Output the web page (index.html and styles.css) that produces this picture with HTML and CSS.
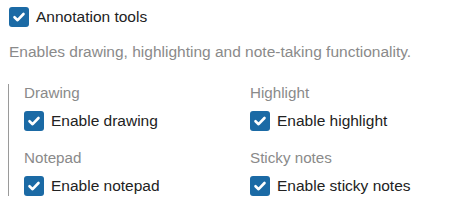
FILE: index.html
```html
<!DOCTYPE html>
<html>
<head>
<meta charset="utf-8">
<link rel="stylesheet" href="styles.css">
</head>
<body>
<div class="panel">
  <label class="check main">
    <span class="box"><svg viewBox="0 0 20 20" width="20" height="20"><polyline points="5.5,10.2 8.6,13.2 14.5,7" fill="none" stroke="#fff" stroke-width="2.6" stroke-linecap="round" stroke-linejoin="round"/></svg></span>
    <span class="text">Annotation tools</span>
  </label>
  <p class="desc">Enables drawing, highlighting and note-taking functionality.</p>
  <div class="group">
    <div class="cell">
      <div class="label">Drawing</div>
      <label class="check">
        <span class="box"><svg viewBox="0 0 20 20" width="20" height="20"><polyline points="5.5,10.2 8.6,13.2 14.5,7" fill="none" stroke="#fff" stroke-width="2.6" stroke-linecap="round" stroke-linejoin="round"/></svg></span>
        <span class="text">Enable drawing</span>
      </label>
    </div>
    <div class="cell">
      <div class="label">Highlight</div>
      <label class="check">
        <span class="box"><svg viewBox="0 0 20 20" width="20" height="20"><polyline points="5.5,10.2 8.6,13.2 14.5,7" fill="none" stroke="#fff" stroke-width="2.6" stroke-linecap="round" stroke-linejoin="round"/></svg></span>
        <span class="text">Enable highlight</span>
      </label>
    </div>
    <div class="cell">
      <div class="label">Notepad</div>
      <label class="check">
        <span class="box"><svg viewBox="0 0 20 20" width="20" height="20"><polyline points="5.5,10.2 8.6,13.2 14.5,7" fill="none" stroke="#fff" stroke-width="2.6" stroke-linecap="round" stroke-linejoin="round"/></svg></span>
        <span class="text">Enable notepad</span>
      </label>
    </div>
    <div class="cell">
      <div class="label">Sticky notes</div>
      <label class="check">
        <span class="box"><svg viewBox="0 0 20 20" width="20" height="20"><polyline points="5.5,10.2 8.6,13.2 14.5,7" fill="none" stroke="#fff" stroke-width="2.6" stroke-linecap="round" stroke-linejoin="round"/></svg></span>
        <span class="text">Enable sticky notes</span>
      </label>
    </div>
  </div>
</div>
</body>
</html>
```
FILE: styles.css
```css
html, body {
  margin: 0;
  padding: 0;
  background: #fff;
}
body {
  font-family: "Liberation Sans", Arial, sans-serif;
  color: #222;
  width: 460px;
  height: 208px;
  overflow: hidden;
}
.panel {
  padding: 7px 0 0 9px;
}
.check {
  display: flex;
  align-items: center;
  gap: 7px;
  height: 20px;
}
.box {
  width: 20px;
  height: 20px;
  border-radius: 3px;
  background: #1b6aa5;
  display: block;
  flex: none;
}
.box svg {
  display: block;
}
.text {
  font-size: 15.5px;
  line-height: 20px;
}
.desc {
  margin: 15px 0 0 0;
  font-size: 15.5px;
  line-height: 20px;
  color: #8a8a8a;
}
.group {
  margin: 22px 0 0 -1px;
  border-left: 1px solid #9a9a9a;
  padding-left: 15px;
  display: grid;
  grid-template-columns: 226px 1fr;
  row-gap: 18px;
}
.label {
  font-size: 15.2px;
  line-height: 18px;
  color: #8a8a8a;
  margin-bottom: 9px;
}
```
